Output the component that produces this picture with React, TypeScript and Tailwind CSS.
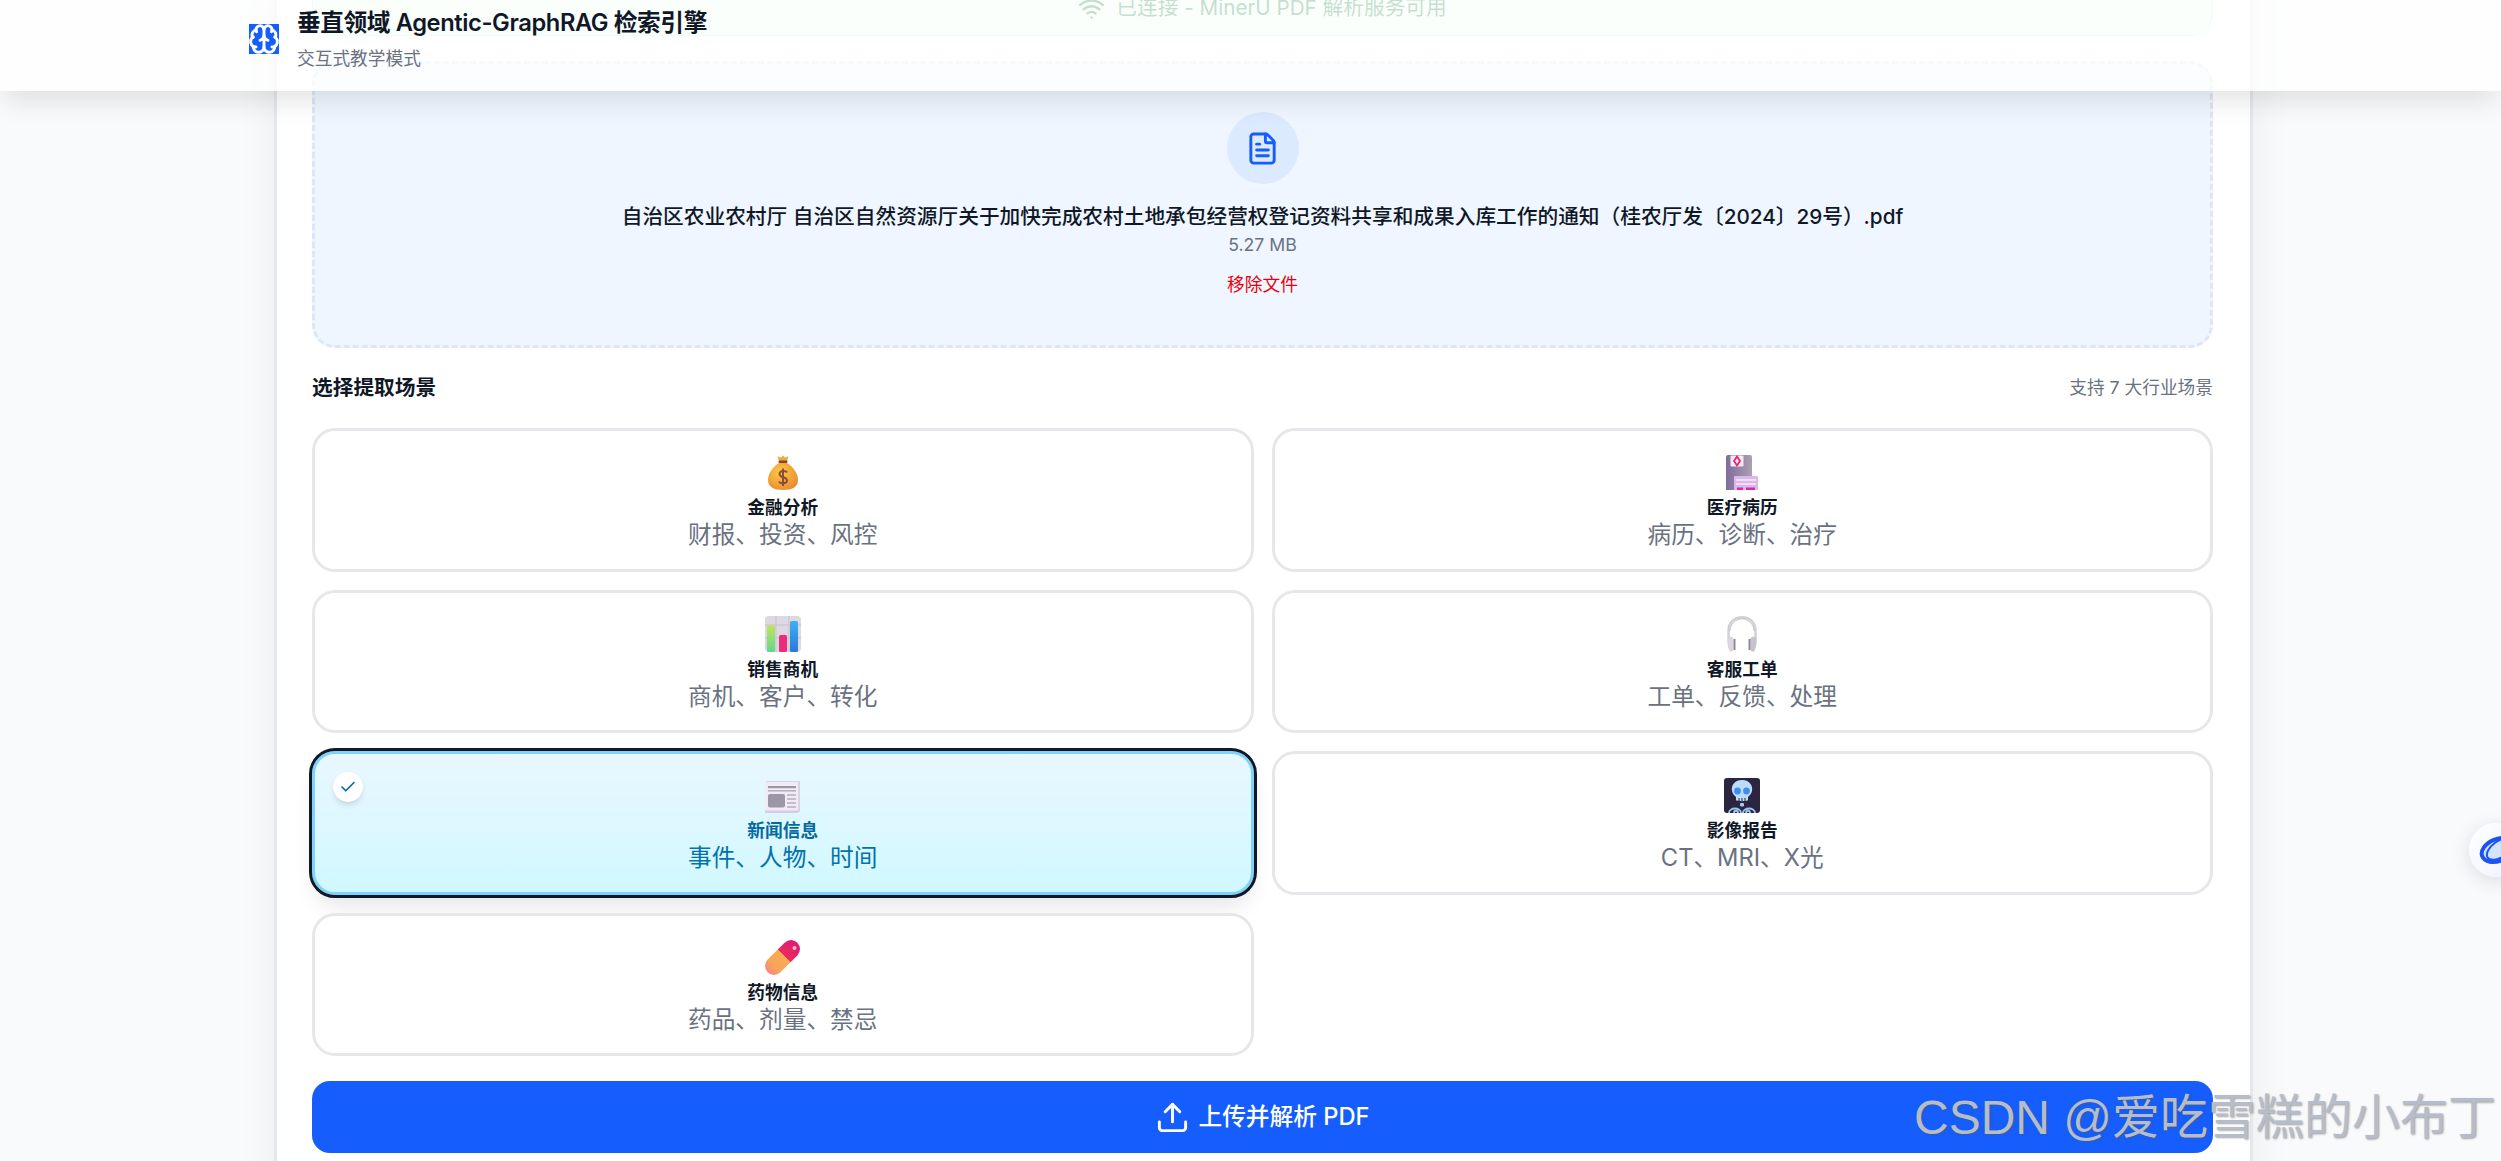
import { Brain, Check, FileText, Upload, Wifi } from 'lucide-react';
import type { ReactNode } from 'react';

// Emoji drawings, the page shows 3D style emoji at about 35px
const MoneyBag = () => (
  <svg viewBox="0 0 30 35" className="w-[30px] h-[35px]">
    <defs>
      <radialGradient id="bag" cx="0.4" cy="0.35" r="0.8">
        <stop offset="0" stopColor="#fdc944" />
        <stop offset="1" stopColor="#e8822e" />
      </radialGradient>
    </defs>
    <path d="M9.5 1 L13 2.8 L15 0.5 L17 2.8 L20.5 1 L19 6 H11 Z" fill="#f3a63a" />
    <rect x="10.5" y="5.5" width="9" height="2.6" rx="1" fill="#7a4b2e" />
    <path d="M11 8 C5 12 0 18 0 25 C0 32 6 35 15 35 C24 35 30 32 30 25 C30 18 25 12 19 8 Z" fill="url(#bag)" />
    <path d="M19 17.5 C18 15.3 11.5 15 11.5 19 C11.5 23 19 21.5 19 25.5 C19 29 12 29 11 26.5 M15 13.5 V31" fill="none" stroke="#8b4d3c" strokeWidth="2" />
  </svg>
);

const Hospital = () => (
  <svg viewBox="0 0 32 35" className="w-[32px] h-[35px]">
    <defs>
      <linearGradient id="hosp" x1="0" x2="1" y1="0" y2="0">
        <stop offset="0" stopColor="#7f6d99" />
        <stop offset="1" stopColor="#aaa0b2" />
      </linearGradient>
    </defs>
    <path d="M0 2 a2 2 0 0 1 2-2 h22 a2 2 0 0 1 2 2 V35 H0 Z" fill="url(#hosp)" />
    <rect x="4.5" y="0.5" width="13" height="11" rx="1" fill="#f5e9f2" />
    <path d="M11 1.5 L14 6 L11 10.5 L8 6 Z" fill="none" stroke="#e8256f" strokeWidth="1.8" />
    <rect x="8" y="21" width="24" height="14" rx="1" fill="#dcb6ec" />
    <rect x="10" y="24" width="20" height="2" fill="#f0e0f6" />
    <rect x="10" y="28" width="20" height="2" fill="#f0e0f6" />
    <rect x="11" y="32.5" width="6" height="2.5" fill="#e0279f" />
    <rect x="20" y="32.5" width="9" height="2.5" fill="#e0279f" />
  </svg>
);

const BarChart = () => (
  <svg viewBox="0 0 36 36" className="w-[36px] h-[36px]">
    <defs>
      <linearGradient id="bar1" x1="0" x2="0" y1="0" y2="1">
        <stop offset="0" stopColor="#c3e35c" />
        <stop offset="1" stopColor="#5fd88a" />
      </linearGradient>
      <linearGradient id="bar2" x1="0" x2="0" y1="0" y2="1">
        <stop offset="0" stopColor="#3fb0f5" />
        <stop offset="1" stopColor="#2a78d8" />
      </linearGradient>
    </defs>
    <rect width="36" height="36" rx="4" fill="#dcd8e4" />
    <path d="M11 0 V36 M24 0 V36 M0 9 H36 M0 22 H36" stroke="#c6c1d2" strokeWidth="1" />
    <rect x="2" y="9" width="8" height="27" rx="1.5" fill="url(#bar1)" />
    <rect x="14" y="19" width="8" height="17" rx="1.5" fill="#ee2b78" />
    <rect x="25" y="5" width="8" height="31" rx="1.5" fill="url(#bar2)" />
  </svg>
);

const Headphones = () => (
  <svg viewBox="0 0 36 36" className="w-[36px] h-[36px]">
    <path d="M4.5 23 V15 C4.5 6 11 1.2 18 1.2 C25 1.2 31.5 6 31.5 15 V23" fill="none" stroke="#d2ced7" strokeWidth="2.4" />
    <path d="M6 15 C6 8 12 2.8 18 2.8 C24 2.8 30 8 30 15" fill="none" stroke="#a09ba8" strokeWidth="0.6" />
    <path d="M3.5 22 L7 20.5 L9.5 22 V34.5 L6.5 36 C4 33 2.8 27 3.5 22 Z" fill="#dad5de" />
    <path d="M32.5 22 L29 20.5 L26.5 22 V34.5 L29.5 36 C32 33 33.2 27 32.5 22 Z" fill="#c8c2cf" />
    <rect x="9.5" y="23" width="2" height="11" fill="#8f8799" />
    <rect x="24.5" y="23" width="2" height="11" fill="#8f8799" />
  </svg>
);

const Newspaper = () => (
  <svg viewBox="0 0 35 32" className="w-[35px] h-[32px]">
    <rect x="1" y="0" width="34" height="31" rx="1" fill="#d9d3e2" />
    <rect x="0" y="1" width="33" height="31" rx="1" fill="#f0ecf5" />
    <rect x="0" y="29.5" width="33" height="2.5" fill="#d8c9ea" />
    <rect x="3" y="5" width="28" height="2.2" fill="#9c96a6" />
    <rect x="3" y="9" width="28" height="1.6" fill="#b8b2c2" />
    <rect x="3" y="13" width="17" height="13.5" rx="2" fill="#9c96a6" />
    <path d="M22 14 H31 M22 18 H31 M22 22 H31 M22 26 H31" stroke="#b5afbf" strokeWidth="1.3" />
  </svg>
);

const XRay = () => (
  <svg viewBox="0 0 36 35" className="w-[36px] h-[35px]">
    <rect width="36" height="35" rx="3" fill="#2c2540" />
    <path d="M18 2 C10 2 7 8 8 13 C8.5 16 11 18 12 19 V22 C12 23.5 24 23.5 24 22 V19 C25 18 27.5 16 28 13 C29 8 26 2 18 2 Z" fill="#bcdcfb" />
    <circle cx="13.5" cy="13" r="3.4" fill="#3f8df2" />
    <circle cx="22.5" cy="13" r="3.4" fill="#3f8df2" />
    <path d="M15 20 V23 M18 20 V23 M21 20 V23" stroke="#2c2540" strokeWidth="1" />
    <rect x="16" y="25" width="4" height="3.5" rx="1" fill="#9cc8f5" />
    <path d="M17 35 C17 29 5 29 5 35 M19 35 C19 29 31 29 31 35 M10 35 C10 32 14 32 14 35 M22 35 C22 32 26 32 26 35" fill="none" stroke="#9cc8f5" strokeWidth="1.8" />
  </svg>
);

const Pill = () => (
  <svg viewBox="0 0 35 35" className="w-[35px] h-[35px]">
    <defs>
      <linearGradient id="pill" x1="0" x2="1" y1="0" y2="0">
        <stop offset="0" stopColor="#fb8585" />
        <stop offset="0.22" stopColor="#f9a458" />
        <stop offset="0.56" stopColor="#f6ac55" />
        <stop offset="0.56" stopColor="#ec2a5f" />
        <stop offset="1" stopColor="#dc1c74" />
      </linearGradient>
    </defs>
    <rect x="-3.5" y="8.5" width="42" height="18" rx="9" transform="rotate(-45 17.5 17.5)" fill="url(#pill)" />
    <circle cx="29.5" cy="8" r="2" fill="#fbb9c9" />
  </svg>
);

type Scene = {
  name: string;
  desc: string;
  icon: ReactNode;
  selected?: boolean;
};

const scenes: Scene[] = [
  { name: '金融分析', desc: '财报、投资、风控', icon: <MoneyBag /> },
  { name: '医疗病历', desc: '病历、诊断、治疗', icon: <Hospital /> },
  { name: '销售商机', desc: '商机、客户、转化', icon: <BarChart /> },
  { name: '客服工单', desc: '工单、反馈、处理', icon: <Headphones /> },
  { name: '新闻信息', desc: '事件、人物、时间', icon: <Newspaper />, selected: true },
  { name: '影像报告', desc: 'CT、MRI、X光', icon: <XRay /> },
  { name: '药物信息', desc: '药品、剂量、禁忌', icon: <Pill /> },
];

const SceneCard = ({ scene }: { scene: Scene }) => (
  <button
    className={
      scene.selected
        ? 'relative h-[143.5px] flex flex-col items-center pt-[24px] rounded-[23px] border-[3px] border-[#7dd3fc] bg-linear-to-b from-[#e9f7ff] to-[#d1f8ff] outline-[3px] outline-[#111827] shadow-[0_15px_22px_-4px_rgba(0,0,0,0.1)]'
        : 'relative h-[143.5px] flex flex-col items-center pt-[24px] rounded-[23px] border-[3px] border-[#e5e7eb] bg-white'
    }
  >
    {scene.selected && (
      <span className="absolute left-[18px] top-[18px] w-[30px] h-[30px] rounded-full bg-white shadow-md flex items-center justify-center">
        <Check className="w-[18px] h-[18px] text-[#0369a1]" strokeWidth={2.2} />
      </span>
    )}
    <span className="h-[35px] flex items-end justify-center">{scene.icon}</span>
    <span className={`mt-[5px] text-[17.7px] leading-[26px] font-semibold ${scene.selected ? 'text-[#0369a1]' : 'text-[#101828]'}`}>
      {scene.name}
    </span>
    <span className={`text-[23.7px] leading-[28px] ${scene.selected ? 'text-[#0272ab]' : 'text-[#6a7282]'}`}>
      {scene.desc}
    </span>
  </button>
);

export default function App() {
  return (
    <div className="relative h-[1161px] overflow-hidden bg-[#f9fafb] font-['Inter','Noto_Sans_CJK_SC',sans-serif]">
      {/* Cabecera translúcida sobre el contenido */}
      <header className="absolute top-0 left-0 right-0 z-20 h-[91px] flex items-start bg-white/75 pl-[249px] shadow-[0_14px_28px_-4px_rgba(0,0,0,0.11)]">
        <div className="mt-[24px] w-[30px] h-[30px] bg-[#155dfc] flex items-center justify-center">
          <Brain className="w-[32px] h-[32px] shrink-0 text-white" strokeWidth={2.2} />
        </div>
        <div className="ml-[18px] pt-[7px]">
          <h1 className="text-[23.7px] leading-[32px] tracking-[-0.4px] font-semibold text-[#101828]">垂直领域 Agentic-GraphRAG 检索引擎</h1>
          <p className="mt-[7px] text-[17.7px] leading-[26px] text-[#6a7282]">交互式教学模式</p>
        </div>
      </header>

      <main className="ml-[274px] -mt-[55px] w-[1979px] border-[3px] border-[#e5e7eb] bg-white pt-[32px] pl-[35px] pr-[37px] pb-[35px] shadow-[0_0_40px_rgba(0,0,0,0.06)]">
        <div className="h-[56px] flex items-center justify-center gap-[11px] rounded-[23px] border-[1.5px] border-[#b9f8cf] bg-[#f0fdf4] text-[20.7px] text-[#15803d]">
          <Wifi className="w-[27px] h-[27px]" strokeWidth={2.2} />
          <span>已连接 - MinerU PDF 解析服务可用</span>
        </div>

        <section className="mt-[25px] h-[287px] flex flex-col items-center rounded-[23px] border-[3px] border-dashed border-[#dbe6f6] bg-[#eff6ff]">
          <div className="mt-[48px] w-[72px] h-[72px] rounded-full bg-[#dbeafe] flex items-center justify-center">
            <FileText className="w-[35px] h-[35px] text-[#155dfc]" strokeWidth={2} />
          </div>
          <p className="mt-[19px] text-[20.7px] leading-[28px] font-medium text-[#101828]">
            自治区农业农村厅 自治区自然资源厅关于加快完成农村土地承包经营权登记资料共享和成果入库工作的通知（桂农厅发〔2024〕29号）.pdf
          </p>
          <p className="mt-[2px] text-[17.7px] leading-[24px] text-[#6a7282]">5.27 MB</p>
          <p className="mt-[16px] text-[17.7px] leading-[24px] text-[#e7000b]">移除文件</p>
        </section>

        <div className="mt-[25px] h-[30px] flex items-center justify-between">
          <h2 className="text-[20.7px] font-semibold text-[#101828]">选择提取场景</h2>
          <span className="text-[17.7px] text-[#6a7282]">支持 7 大行业场景</span>
        </div>

        <div className="mt-[25px] grid grid-cols-2 gap-[18px]">
          {scenes.map((scene) => (
            <SceneCard key={scene.name} scene={scene} />
          ))}
        </div>

        <button className="mt-[25px] w-full h-[72px] rounded-[18px] bg-[#155dfc] flex items-center justify-center gap-[8px] text-[23.7px] font-medium text-white">
          <Upload className="w-[35px] h-[35px]" strokeWidth={2} />
          <span>上传并解析 PDF</span>
        </button>
      </main>

      {/* Botón flotante del borde derecho */}
      <div className="absolute left-[2469px] top-[823px] z-10 w-[54px] h-[54px] rounded-full bg-linear-to-br from-white to-[#eef2ff] shadow-[0_4px_20px_rgba(0,0,0,0.12)] overflow-hidden">
        <svg viewBox="0 0 54 54" className="w-[54px] h-[54px]">
          <ellipse cx="29" cy="27" rx="17" ry="11" transform="rotate(-22 29 27)" fill="#d5e4fc" stroke="#1a55f0" strokeWidth="4" />
          <ellipse cx="31" cy="26" rx="15" ry="8" transform="rotate(-35 31 26)" fill="none" stroke="#1a55f0" strokeWidth="2" />
        </svg>
      </div>

      {/* Marca de agua */}
      <div className="absolute z-30 left-[1914px] top-[1088px] text-[48px] leading-[60px] whitespace-nowrap text-[#b6bdca] [text-shadow:1px_1px_2px_rgba(90,90,90,0.55)] font-['Liberation_Sans','Noto_Sans_CJK_SC',sans-serif]">
        CSDN @爱吃雪糕的小布丁
      </div>
    </div>
  );
}
